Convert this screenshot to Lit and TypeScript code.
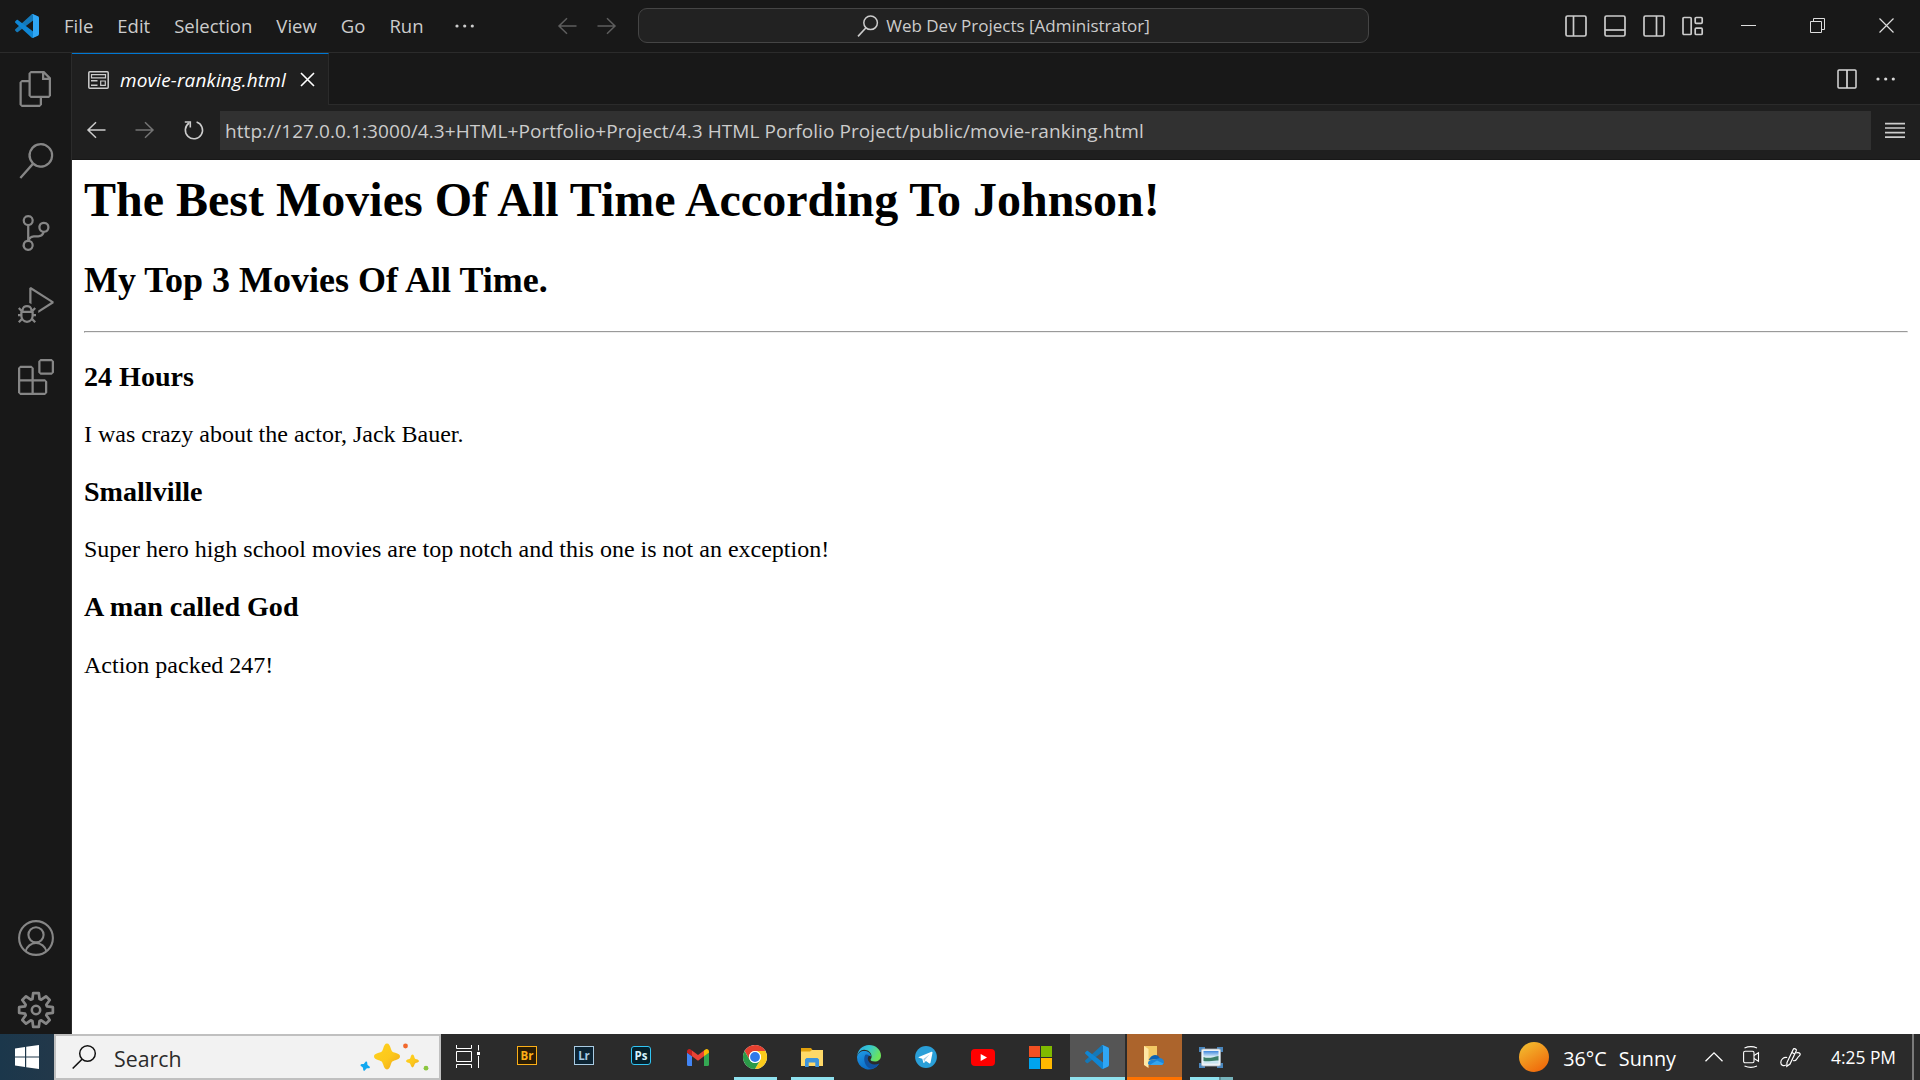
import { LitElement, html, css, svg, TemplateResult, SVGTemplateResult } from "lit";
import { customElement } from "lit/decorators.js";

const icon = (w: number, h: number, body: SVGTemplateResult, box = `0 0 ${w} ${h}`): TemplateResult =>
  html`<svg width=${w} height=${h} viewBox=${box} fill="none">${body}</svg>`;

const vscodeLogo = (size: number) =>
  icon(
    size,
    size,
    svg`
    <path fill="#1478b8" d="M96.46 10.8 75.86.88C73.47-.27 70.62.21 68.75 2.08L1.3 63.58c-1.81 1.65-1.81 4.51 0 6.17l5.51 5c1.49 1.35 3.72 1.45 5.32.24L93.36 13.37C96.09 11.3 100 13.25 100 16.67v-.24c0-2.4-1.38-4.59-3.54-5.63Z"/>
    <path fill="#0f86d4" d="M96.46 89.2 75.86 99.12c-2.39 1.15-5.24.67-7.11-1.2L1.3 36.42c-1.81-1.66-1.81-4.51 0-6.17l5.51-5c1.49-1.35 3.72-1.45 5.32-.24L93.36 86.63c2.73 2.07 6.64.12 6.64-3.3v.24c0 2.4-1.38 4.59-3.54 5.63Z"/>
    <path fill="#2fa6f5" d="M75.86 99.13c-2.39 1.14-5.24.66-7.11-1.21 2.31 2.3 6.25.67 6.25-2.59V4.67c0-3.26-3.94-4.89-6.25-2.59 1.87-1.87 4.72-2.35 7.11-1.21l20.6 9.91A6.25 6.25 0 0 1 100 16.41v67.18c0 2.4-1.38 4.59-3.54 5.63Z"/>`,
    "0 0 100 100",
  );

const gearPath = (() => {
  const pts: string[] = [];
  const at = (r: number, deg: number) => {
    const a = (deg * Math.PI) / 180;
    pts.push(`${(12 + r * Math.sin(a)).toFixed(2)} ${(12 - r * Math.cos(a)).toFixed(2)}`);
  };
  for (let k = 0; k < 8; k++) {
    const diag = k % 2 === 1;
    const r = diag ? 11.3 : 11.4;
    at(7.7, k * 45 - 18);
    at(r, k * 45 - (diag ? 9 : 9.5));
    at(r, k * 45 + (diag ? 9 : 9.5));
    at(7.7, k * 45 + 18);
  }
  return `M${pts.join("L")}Z`;
})();

const activity = (d: string) => icon(36, 36, svg`<path fill="currentColor" fill-rule="evenodd" d=${d}/>`, "0 0 24 24");

const filesIcon = activity("M17.5 0h-9L7 1.5V6H2.5L1 7.5v15.07L2.5 24h12.07L16 22.57V18h4.7l1.3-1.43V4.5L17.5 0zm0 2.12l2.38 2.38H17.5V2.12zm-3 20.38h-12v-15H7v9.07L8.5 18h6v4.5zm6-6h-12v-15H16V6h4.5v10.5z");
const searchIcon = activity("M15.25 0a8.25 8.25 0 0 0-6.18 13.72L1 22.88l1.12 1 8.05-9.12A8.251 8.251 0 1 0 15.25.01V0zm0 15a6.75 6.75 0 1 1 0-13.5 6.75 6.75 0 0 1 0 13.5z");
const branchIcon = activity("M21.007 8.222A3.738 3.738 0 0 0 15.045 5.2a3.737 3.737 0 0 0 1.156 6.583 2.988 2.988 0 0 1-2.668 1.67h-2.99a4.456 4.456 0 0 0-2.989 1.165V7.4a3.737 3.737 0 1 0-1.494 0v9.117a3.776 3.776 0 1 0 1.816.099 2.99 2.99 0 0 1 2.668-1.667h2.99a4.484 4.484 0 0 0 4.223-3.039 3.736 3.736 0 0 0 3.25-3.687zM4.565 3.738a2.242 2.242 0 1 1 4.484 0 2.242 2.242 0 0 1-4.484 0zm4.484 16.441a2.242 2.242 0 1 1-4.484 0 2.242 2.242 0 0 1 4.484 0zm8.221-9.715a2.242 2.242 0 1 1 0-4.485 2.242 2.242 0 0 1 0 4.485z");
const debugIcon = activity("M10.94 13.5l-1.32 1.32a3.73 3.73 0 0 0-7.24 0L1.06 13.5 0 14.56l1.72 1.72-.22.22V18H0v1.5h1.5v.08c.077.489.214.966.41 1.42L0 22.94 1.06 24l1.65-1.65A4.308 4.308 0 0 0 6 24a4.31 4.31 0 0 0 3.29-1.65L10.94 24 12 22.94 10.09 21c.198-.464.336-.951.41-1.45v-.1H12V18h-1.5v-1.5l-.22-.22L12 14.56l-1.06-1.06zM6 13.5a2.25 2.25 0 0 1 2.25 2.25h-4.5A2.25 2.25 0 0 1 6 13.5zm3 6a3.33 3.33 0 0 1-3 3 3.33 3.33 0 0 1-3-3v-2.25h6v2.25zm14.76-9.9v1.26L13.5 17.37V15.6l8.5-5.37L9 2v9.46a5.07 5.07 0 0 0-1.5-.72V.63L8.64 0l15.12 9.6z");
const extensionsIcon = activity("M13.5 1.5L15 0h7.5L24 1.5V9l-1.5 1.5H15L13.5 9V1.5zm1.5 0V9h7.5V1.5H15zM0 15V6l1.5-1.5H9L10.5 6v7.5H18l1.5 1.5v7.5L18 24H1.5L0 22.5V15zm9-1.5V6H1.5v7.5H9zM9 15H1.5v7.5H9V15zm1.5 7.5H18V15h-7.5v7.5z");
const accountIcon = icon(36, 36, svg`<g stroke="currentColor" stroke-width="2.1"><circle cx="18" cy="18" r="16.9"/><circle cx="18" cy="14.8" r="7.6"/><path d="M7.6 31.2a10.7 10.7 0 0 1 20.8 0"/></g>`);
const gearIcon = icon(36, 36, svg`<path d=${gearPath} stroke="currentColor" stroke-width="1.8" stroke-linejoin="round"/><circle cx="12" cy="12" r="2.8" stroke="currentColor" stroke-width="1.7"/>`, "0 0 24 24");

const arrowLeft = icon(20, 18, svg`<path d="M10 1.2 2 9l8 7.8M2 9h17.5" stroke="currentColor" stroke-width="1.5"/>`);
const arrowRight = icon(20, 18, svg`<path d="m10 1.2 8 7.8-8 7.8M18 9H.5" stroke="currentColor" stroke-width="1.5"/>`);
const dots = icon(20, 4, svg`<g fill="currentColor"><circle cx="2" cy="2" r="1.6"/><circle cx="9.7" cy="2" r="1.6"/><circle cx="17.3" cy="2" r="1.6"/></g>`);
const magnifier = icon(22, 22, svg`<circle cx="13.6" cy="7.8" r="6.8" stroke="currentColor" stroke-width="1.5"/><path d="M9 12.8 1 21.4" stroke="currentColor" stroke-width="1.6"/>`);
const frame = svg`<rect x="1" y="1" width="20" height="20" rx="1.5"/>`;
const layoutLeft = icon(22, 22, svg`<g stroke="currentColor" stroke-width="1.7">${frame}<path d="M8.5 1v20"/></g>`);
const layoutBottom = icon(22, 22, svg`<g stroke="currentColor" stroke-width="1.7">${frame}<path d="M1 15h20"/></g>`);
const layoutRight = icon(22, 22, svg`<g stroke="currentColor" stroke-width="1.7">${frame}<path d="M13.5 1v20"/></g>`);
const layoutCustom = icon(22, 20, svg`<g stroke="currentColor" stroke-width="1.7"><rect x="1" y="1.5" width="8.2" height="17" rx="1"/><rect x="13.2" y="1.5" width="7" height="5.8" rx="1"/><rect x="13.2" y="12.2" width="7" height="6.3" rx="1"/></g>`);
const minimize = icon(15, 15, svg`<path d="M0 7.5h15" stroke="#ddd"/>`);
const restore = icon(15, 15, svg`<path d="M.5 3.5h11v11H.5zM3.5 3.5v-3h11v11h-3" stroke="#ddd"/>`);
const closeWindow = icon(15, 15, svg`<path d="m.5.5 14 14M14.5.5l-14 14" stroke="#ddd" stroke-width="1.2"/>`);
const previewIcon = icon(21, 18, svg`<rect x=".8" y=".8" width="19.4" height="16.4" rx="1" stroke="currentColor" stroke-width="1.5"/><path d="M3.5 3.6h14v3.2h-14z M12.7 10h4.6v4.3h-4.6z" stroke="currentColor" stroke-width="1.2"/><path d="M3 9.8h6.5M3 14.2h6.5" stroke="currentColor" stroke-width="1.4"/>`);
const closeTab = icon(15, 15, svg`<path d="m1 1 13 13M14 1 1 14" stroke="#fff" stroke-width="1.6"/>`);
const splitIcon = icon(20, 20, svg`<rect x="1" y="1" width="18" height="18" rx="1" stroke="#d8d8d8" stroke-width="1.5"/><path d="M10 1v18" stroke="#d8d8d8" stroke-width="1.7"/>`);
const reloadIcon = icon(20, 20, svg`<path d="M5.2 3A8.6 8.6 0 1 0 12.6 2" stroke="currentColor" stroke-width="1.6"/><path d="M.8 2h5.5v5.6" stroke="currentColor" stroke-width="1.6"/>`);
const menuIcon = icon(20, 17, svg`<path d="M0 1.6h20M0 6h20M0 10.6h20M0 15.2h20" stroke="currentColor" stroke-width="1.7"/>`);

const winLogo = icon(24, 24, svg`<path fill="#fff" d="M0 3.4 10 2v9.4H0zM11.2 1.8 24 0v11.4H11.2zM0 12.6h10V22L0 20.6zM11.2 12.6H24V24l-12.8-1.8z"/>`);
const star = (cx: number, cy: number, r: number, fill: string, rot = 0) =>
  svg`<path transform="translate(${cx} ${cy}) rotate(${rot}) scale(${r})" fill=${fill} d="M0-1C.16-1 .22-.84.3-.6.38-.36.4-.36.64-.28.86-.2 1-.16 1 0S.86.2.64.28C.4.36.38.36.3.6.22.84.16 1 0 1S-.22.84-.3.6C-.38.36-.4.36-.64.28-.86.2-1 .16-1 0S-.86-.2-.64-.28C-.4-.36-.38-.36-.3-.6-.22-.84-.16-1 0-1Z"/>`;
const sparkles = icon(70, 28, svg`
  <defs><linearGradient id="gold" x1="0" y1="0" x2="1" y2="1"><stop offset="0" stop-color="#ffd21f"/><stop offset=".55" stop-color="#fcc81c"/><stop offset="1" stop-color="#eda41e"/></linearGradient></defs>
  ${star(27, 13.5, 13, "url(#gold)")}${star(52.5, 18, 6.4, "url(#gold)")}${star(5.2, 23.2, 4.8, "#12a8f0", 15)}
  <circle cx="45.5" cy="3" r="2.4" fill="#f2682c"/><circle cx="66" cy="25.2" r="2.4" fill="#8bc63f"/>`);
const taskView = icon(24, 24, svg`<path d="M.5 0v3.5h15V0M.5 6.5h15v10H.5zM.5 23v-3.5h15V23M22.5 0v5.5M22.5 11v12" stroke="#fff"/><path d="M21 7h3v3h-3z" fill="#fff"/>`);

const gmail = icon(22, 17, svg`<path fill="#4285f4" d="M0 3.5 5 7v10H1.5A1.5 1.5 0 0 1 0 15.5z"/><path fill="#34a853" d="M17 7l5-3.5v12a1.5 1.5 0 0 1-1.5 1.5H17z"/><path fill="#ea4335" d="M5 1.6 11 6l6-4.4v5.6l-6 4.5-6-4.5z"/><path fill="#c5221f" d="M0 2.4C0 .3 2.4-.7 4 .7l1 .9v5.6L0 3.7z"/><path fill="#fbbc04" d="M22 2.4C22 .3 19.6-.7 18 .7l-1 .9v5.6l5-3.5z"/>`);
const chrome = icon(24, 24, svg`<circle cx="12" cy="12" r="12" fill="#fff"/><path fill="#e5402f" d="M1.6 6A12 12 0 0 1 22.4 6H12a6 6 0 0 0-5.2 9z"/><path fill="#fbcb1b" d="M22.4 6A12 12 0 0 1 12 24l5.2-9A6 6 0 0 0 12 6z"/><path fill="#2b9a48" d="M12 24A12 12 0 0 1 1.6 6l5.2 9a6 6 0 0 0 10.4 0z"/><circle cx="12" cy="12" r="6" fill="#fff"/><circle cx="12" cy="12" r="4.9" fill="#3079ea"/>`);
const explorer = icon(22, 19, svg`<path fill="#e2a10c" d="M0 0h10l1.5 2H22v4H0z"/><path fill="#ffd968" d="M0 3.6h9L11 2h11v16H0z"/><path fill="#3d94dc" d="M4 19v-7.5L5.5 10h11L18 11.500V19h-3.700v-4.500H7.700V19z"/>`);
const edge = icon(24, 24, svg`
  <defs><linearGradient id="eg" x1="0" y1="0" x2="1" y2=".4"><stop offset="0" stop-color="#2aa6ea"/><stop offset=".5" stop-color="#36c7cf"/><stop offset="1" stop-color="#6be45b"/></linearGradient>
  <linearGradient id="eb" x1="0" y1="0" x2=".6" y2="1"><stop offset="0" stop-color="#1f9be6"/><stop offset="1" stop-color="#0a68c4"/></linearGradient></defs>
  <path fill="url(#eb)" d="M0 12C1 7 5 5.500 8.500 6c3.500.5 5.500 3 5.500 5.500-1-1-2.600-1-3.600.5-1.400 2.500.6 7.500 5.600 8.400 2 .3 4-.2 6.200-1.600A12 12 0 0 1 0 12z"/>
  <path fill="#11529f" d="M8.200 10c-2 3.500-1.200 11.500 5.800 13.800 3.200-.4 6.500-2.400 8.400-5.300-5 2-9.500 1-11.200-3-.8-2-.4-3.800 1-4.700-1.200-1.300-3-1.600-4-.8z"/>
  <path fill="url(#eg)" d="M0 11.500C.5 5 5.500 0 12 0c7 0 12 5 12 10.500 0 4-3 6-6.200 6-3 0-4.400-1-4.200-2 .2-.6 1-1.200 1-3C14.600 7.500 11 4.600 7 4.700 3.500 4.800 1 7.500 0 11.500z"/>`);
const telegram = icon(22, 22, svg`<circle cx="11" cy="11" r="10.900" fill="#2a9fd8"/><path fill="#fff" d="M3.800 11 16.500 5.800c.7-.2 1.100.1 1 .9l-2 10c-.2.8-.8.9-1.400.5l-3.200-2.300-1.700 1.800c-.4.400-.8.200-.9-.3l-1-3.700-3.300-1c-.8-.2-.8-.5-.2-.7z"/><path d="m8.300 13 6.200-4.600-4.600 5.600-.5 2.300z" fill="#a9cfe4"/>`);
const youtube = icon(24, 17, svg`<rect width="24" height="17" rx="4" fill="#f00"/><path fill="#fff" d="m9.700 4.900 6.300 3.600-6.300 3.600z"/>`);
const msStore = icon(23, 23, svg`<path fill="#f25022" d="M0 0h11v11H0z"/><path fill="#7fba00" d="M12 0h11v11H12z"/><path fill="#00a4ef" d="M0 12h11v11H0z"/><path fill="#ffb900" d="M12 12h11v11H12z"/>`);
const cloudFolder = icon(20, 22, svg`<path fill="#f2c865" d="M0 0h13v19H0z"/><path fill="#ffe7a5" d="m0 0 4.500 3v19L0 19z"/><path fill="#0b62b5" d="M4.500 14C6 11.500 8 9 11 9c3 0 4.500 2 5 4z"/><path fill="#1b84d8" d="M4 17.500C4 15 6 13.500 8.500 14L16 12c2.500.5 4 2 4 4 0 1.800-1.500 3-3.500 3h-9C5.500 19 4 18.500 4 17.500z"/><path fill="#35a5ee" d="m6 18.800 7-4.300 6.500 3c-.6 1-1.700 1.500-3 1.500h-9z"/>`);
const snip = icon(24, 21, svg`
  <defs><linearGradient id="sky" x1="0" y1="0" x2="0" y2="1"><stop offset="0" stop-color="#3f87dc"/><stop offset=".5" stop-color="#e4f4fb"/><stop offset="1" stop-color="#c4e2ef"/></linearGradient></defs>
  <path fill="#4a86bd" d="M0 0h6v5H0zM18 0h6v5h-6zM0 16h6v5H0zM18 16h6v5h-6z"/><rect x="2.500" y="2" width="19" height="17" rx="1.500" fill="#eef2f5" stroke="#aab4bd" stroke-width=".8"/><path fill="url(#sky)" d="M4.500 4h15v12.500h-15z"/><path fill="#3c7f68" d="M4.500 10c5 2 10 0 15-1v4.500c-5-.5-10 1.500-15 .5z"/>`);

const sun = icon(30, 30, svg`<defs><linearGradient id="sun" x1=".2" y1=".05" x2=".75" y2=".95"><stop offset="0" stop-color="#f2b92e"/><stop offset="1" stop-color="#f06a0b"/></linearGradient></defs><circle cx="15" cy="15" r="15" fill="url(#sun)"/>`);
const chevronUp = icon(18, 10, svg`<path d="m.5 9.300 8.500-8.500 8.500 8.500" stroke="#fff" stroke-width="1.300"/>`);
const meetNow = icon(17, 22, svg`<g stroke="#fff" stroke-width="1.100"><rect x=".6" y="5.300" width="10.400" height="11.400" rx="1.500"/><path d="m11 9.500 4.500-2.800v8.600L11 12.500M1.500 2Q8 -.8 14 2M1.500 20q6.500 2.800 12.500 0"/></g>`);
const penIcon = icon(21, 20, svg`<g stroke="#fff" stroke-width="1.200"><path d="M7 15.500 13.300 2.200c.6-1.300 3.600 0 3 1.500L10 17l-3.200 2.200z"/><path d="m11.800 5.500 3 1.500M7.200 10.500C3.500 9.800.8 12.500.8 15.500c0 3 3.200 4 5 2.400M13 13.500c2 .8 3.500-.5 4.500-2.500 1-2 2.500-2 2.700-3.500.2-1.500-1.700-2.300-4-1.600"/></g>`);

interface Movie { title: string; note: string; }
interface Task { cls: string; body: TemplateResult; }

@customElement("app-root")
export class AppRoot extends LitElement {
  private menus = ["File", "Edit", "Selection", "View", "Go", "Run"];

  private movies: Movie[] = [
    { title: "24 Hours", note: "I was crazy about the actor, Jack Bauer." },
    { title: "Smallville", note: "Super hero high school movies are top notch and this one is not an exception!" },
    { title: "A man called God", note: "Action packed 247!" },
  ];

  private tasks: Task[] = [
    { cls: "", body: html`<span class="adobe br">Br</span>` },
    { cls: "", body: html`<span class="adobe lr">Lr</span>` },
    { cls: "", body: html`<span class="adobe ps">Ps</span>` },
    { cls: "", body: gmail },
    { cls: "open", body: chrome },
    { cls: "open", body: explorer },
    { cls: "", body: edge },
    { cls: "", body: telegram },
    { cls: "", body: youtube },
    { cls: "", body: msStore },
    { cls: "current", body: vscodeLogo(24) },
    { cls: "alert", body: cloudFolder },
    { cls: "open several", body: snip },
  ];

  static styles = css`
    :host {
      display: flex;
      flex-direction: column;
      width: 1920px;
      height: 1080px;
      overflow: hidden;
      background: #181818;
      color: #cccccc;
      font-family: "Open Sans", "Noto Sans", sans-serif;
      font-size: 18.5px;
    }
    * { box-sizing: border-box; }
    svg { display: block; flex: none; overflow: visible; }

    .titlebar {
      display: grid;
      grid-template-columns: 638px 731px 1fr;
      height: 53px;
      border-bottom: 1px solid #2b2b2b;
    }
    .menubar { display: flex; align-items: center; padding-left: 15px; line-height: 50px; }
    .menus { display: flex; margin-left: 13px; }
    .menu { padding: 0 12px; }
    .more { margin-left: 19px; }
    .history { display: flex; gap: 20px; margin-left: auto; padding-right: 21px; color: #5e5e5e; }
    .command {
      display: flex;
      align-items: center;
      justify-content: center;
      gap: 6px;
      height: 35px;
      margin-top: 8px;
      border: 1px solid #454545;
      border-radius: 9px;
      background: #222222;
      font-size: 17px;
      white-space: nowrap;
    }
    .command-text { padding-left: 1px; letter-spacing: 0; }
    .window-tools { display: flex; align-items: center; padding: 0 26px 0 196px; }
    .layouts { display: flex; align-items: center; gap: 17px; }
    .caption { display: flex; align-items: center; gap: 54px; margin-left: auto; padding-bottom: 1px; }

    .workbench { display: flex; height: 981px; overflow: hidden; }
    .activity {
      display: flex;
      flex-direction: column;
      justify-content: space-between;
      width: 72px;
      height: 993px;
      flex: none;
      border-right: 1px solid #2b2b2b;
      color: #868686;
    }
    .slot { display: flex; align-items: center; justify-content: center; height: 72px; }

    .editor { display: flex; flex-direction: column; flex: 1; min-width: 0; }
    .tabs { display: flex; height: 52px; }
    .tab {
      display: flex;
      align-items: center;
      width: 257px;
      padding-left: 16px;
      border-top: 1px solid #0078d4;
      border-right: 1px solid #2b2b2b;
      background: #1f1f1f;
    }
    .tab-name {
      width: 191px;
      flex: none;
      padding-left: 11px;
      color: #ffffff;
      font-style: italic;
      font-size: 19px;
      letter-spacing: 0.12px;
      white-space: nowrap;
    }
    .tab-actions {
      display: flex;
      align-items: center;
      justify-content: flex-end;
      gap: 19px;
      flex: 1;
      padding-right: 24px;
      border-bottom: 1px solid #2b2b2b;
      color: #d8d8d8;
    }
    .address {
      display: flex;
      align-items: center;
      height: 55px;
      padding: 0 15px 4px 14px;
      border-bottom: 1px solid #181818;
      background: #1f1f1f;
    }
    .nav { display: flex; gap: 29px; align-items: center; width: 134px; }
    .disabled { color: #747474; }
    .url {
      flex: 1;
      height: 39px;
      margin-top: 1px;
      margin-right: 14px;
      padding-left: 5px;
      background: #313131;
      font-size: 19px;
      letter-spacing: 0.07px;
      line-height: 41px;
      white-space: nowrap;
    }

    .page {
      flex: 1;
      padding: 12px;
      background: #ffffff;
      color: #000000;
      font-family: "Liberation Serif", "Times New Roman", serif;
      font-size: 24px;
    }
    h1 { margin: 0 0 32px; font-size: 48px; }
    h2 { margin: 0 0 30px; font-size: 36px; }
    hr { height: 2px; margin: 0 0 28px; border: solid; border-width: 1px; border-color: #9a9a9a #eeeeee #eeeeee #9a9a9a; }
    h3 { margin: 0 0 28px; font-size: 28.08px; }
    p { margin: 0 0 28px; }
    p:last-child { padding-top: 1px; }

    .taskbar { display: flex; height: 46px; background: #2b2b2b; color: #ffffff; }
    .start {
      display: flex;
      align-items: center;
      justify-content: center;
      width: 54px;
      background: linear-gradient(90deg, #1b374b, #22384a);
    }
    .search {
      display: flex;
      align-items: center;
      width: 387px;
      padding: 0 9px 0 16px;
      border: 2px solid #c0c0c0;
      background: #f2f2f2;
      color: #111111;
    }
    .search-label { flex: 1; padding: 3px 0 0 18px; font-size: 21.3px; color: #2b2b2b; }
    .task-view { display: flex; align-items: center; justify-content: center; width: 58px; padding-right: 4px; }
    .tasks { display: flex; gap: 2px; margin-left: 1px; }
    .task {
      display: flex;
      align-items: center;
      justify-content: center;
      width: 55px;
      border-bottom: 3px solid transparent;
      padding: 3px 1px 0 0;
    }
    .open { background: linear-gradient(#8fe1ee, #8fe1ee) 6px bottom / 43px 3px no-repeat border-box; }
    .several { background: linear-gradient(90deg, #8fe1ee 29px, #5f8f95 29px, #5f8f95 31px, #76b3bb 31px) 6px bottom / 43px 3px no-repeat border-box; }
    .current { background: #555555; border-bottom-color: #8fe1ee; }
    .alert { background: #ac642c; border-bottom-color: #ff7200; }
    .adobe {
      width: 20px;
      height: 19px;
      margin-bottom: 4px;
      border: 1px solid;
      font: 700 11.5px/17px "Open Sans", sans-serif;
      text-align: center;
    }
    .br { color: #fcaf17; background: #2a1d05; }
    .lr { color: #a9cbe3; background: #0c2433; }
    .ps { color: #d5f2fb; background: #04202b; border-color: #31c5f4; border-radius: 3px; }
    .tray { display: flex; align-items: center; margin-left: auto; height: 46px; white-space: nowrap; }
    .weather { display: flex; align-items: center; gap: 14px; margin-right: 29px; font-size: 19.8px; }
    .weather-text { padding-top: 2px; }
    .sky { margin-left: 12px; }
    .tray-icons { display: flex; align-items: center; gap: 20px; margin-right: 30px; }
    .clock { font-size: 17.4px; margin-right: 16px; }
    .peek { width: 8px; height: 46px; border-left: 2px solid #7a7a7a; }
  `;

  render() {
    return html`
      <header class="titlebar">
        <div class="menubar">
          ${vscodeLogo(24)}
          <nav class="menus">${this.menus.map((m) => html`<span class="menu">${m}</span>`)}</nav>
          <span class="more">${dots}</span>
          <div class="history">${arrowLeft}${arrowRight}</div>
        </div>
        <div class="command">${magnifier}<span class="command-text">Web Dev Projects [Administrator]</span></div>
        <div class="window-tools">
          <div class="layouts">${layoutLeft}${layoutBottom}${layoutRight}${layoutCustom}</div>
          <div class="caption">${minimize}${restore}${closeWindow}</div>
        </div>
      </header>
      <main class="workbench">
        <aside class="activity">
          <div>${[filesIcon, searchIcon, branchIcon, debugIcon, extensionsIcon].map((i) => html`<div class="slot">${i}</div>`)}</div>
          <div>${[accountIcon, gearIcon].map((i) => html`<div class="slot">${i}</div>`)}</div>
        </aside>
        <section class="editor">
          <div class="tabs">
            <div class="tab">${previewIcon}<span class="tab-name">movie-ranking.html</span>${closeTab}</div>
            <div class="tab-actions">${splitIcon}${dots}</div>
          </div>
          <div class="address">
            <div class="nav">${arrowLeft}<span class="disabled">${arrowRight}</span>${reloadIcon}</div>
            <div class="url">http://127.0.0.1:3000/4.3+HTML+Portfolio+Project/4.3 HTML Porfolio Project/public/movie-ranking.html</div>
            ${menuIcon}
          </div>
          <article class="page">
            <h1>The Best Movies Of All Time According To Johnson!</h1>
            <h2>My Top 3 Movies Of All Time.</h2>
            <hr />
            ${this.movies.map((m) => html`<h3>${m.title}</h3><p>${m.note}</p>`)}
          </article>
        </section>
      </main>
      <footer class="taskbar">
        <div class="start">${winLogo}</div>
        <div class="search">${icon(24, 24, svg`<circle cx="15.500" cy="8.500" r="7.800" stroke="#111" stroke-width="1.500"/><path d="M10 14.200.7 23.500" stroke="#111" stroke-width="1.600"/>`)}<span class="search-label">Search</span>${sparkles}</div>
        <div class="task-view">${taskView}</div>
        <div class="tasks">${this.tasks.map((t) => html`<div class="task ${t.cls}">${t.body}</div>`)}</div>
        <div class="tray">
          <div class="weather">${sun}<span class="weather-text">36°C<span class="sky">Sunny</span></span></div>
          <div class="tray-icons">${chevronUp}${meetNow}${penIcon}</div>
          <span class="clock">4:25 PM</span>
          <div class="peek"></div>
        </div>
      </footer>
    `;
  }
}
